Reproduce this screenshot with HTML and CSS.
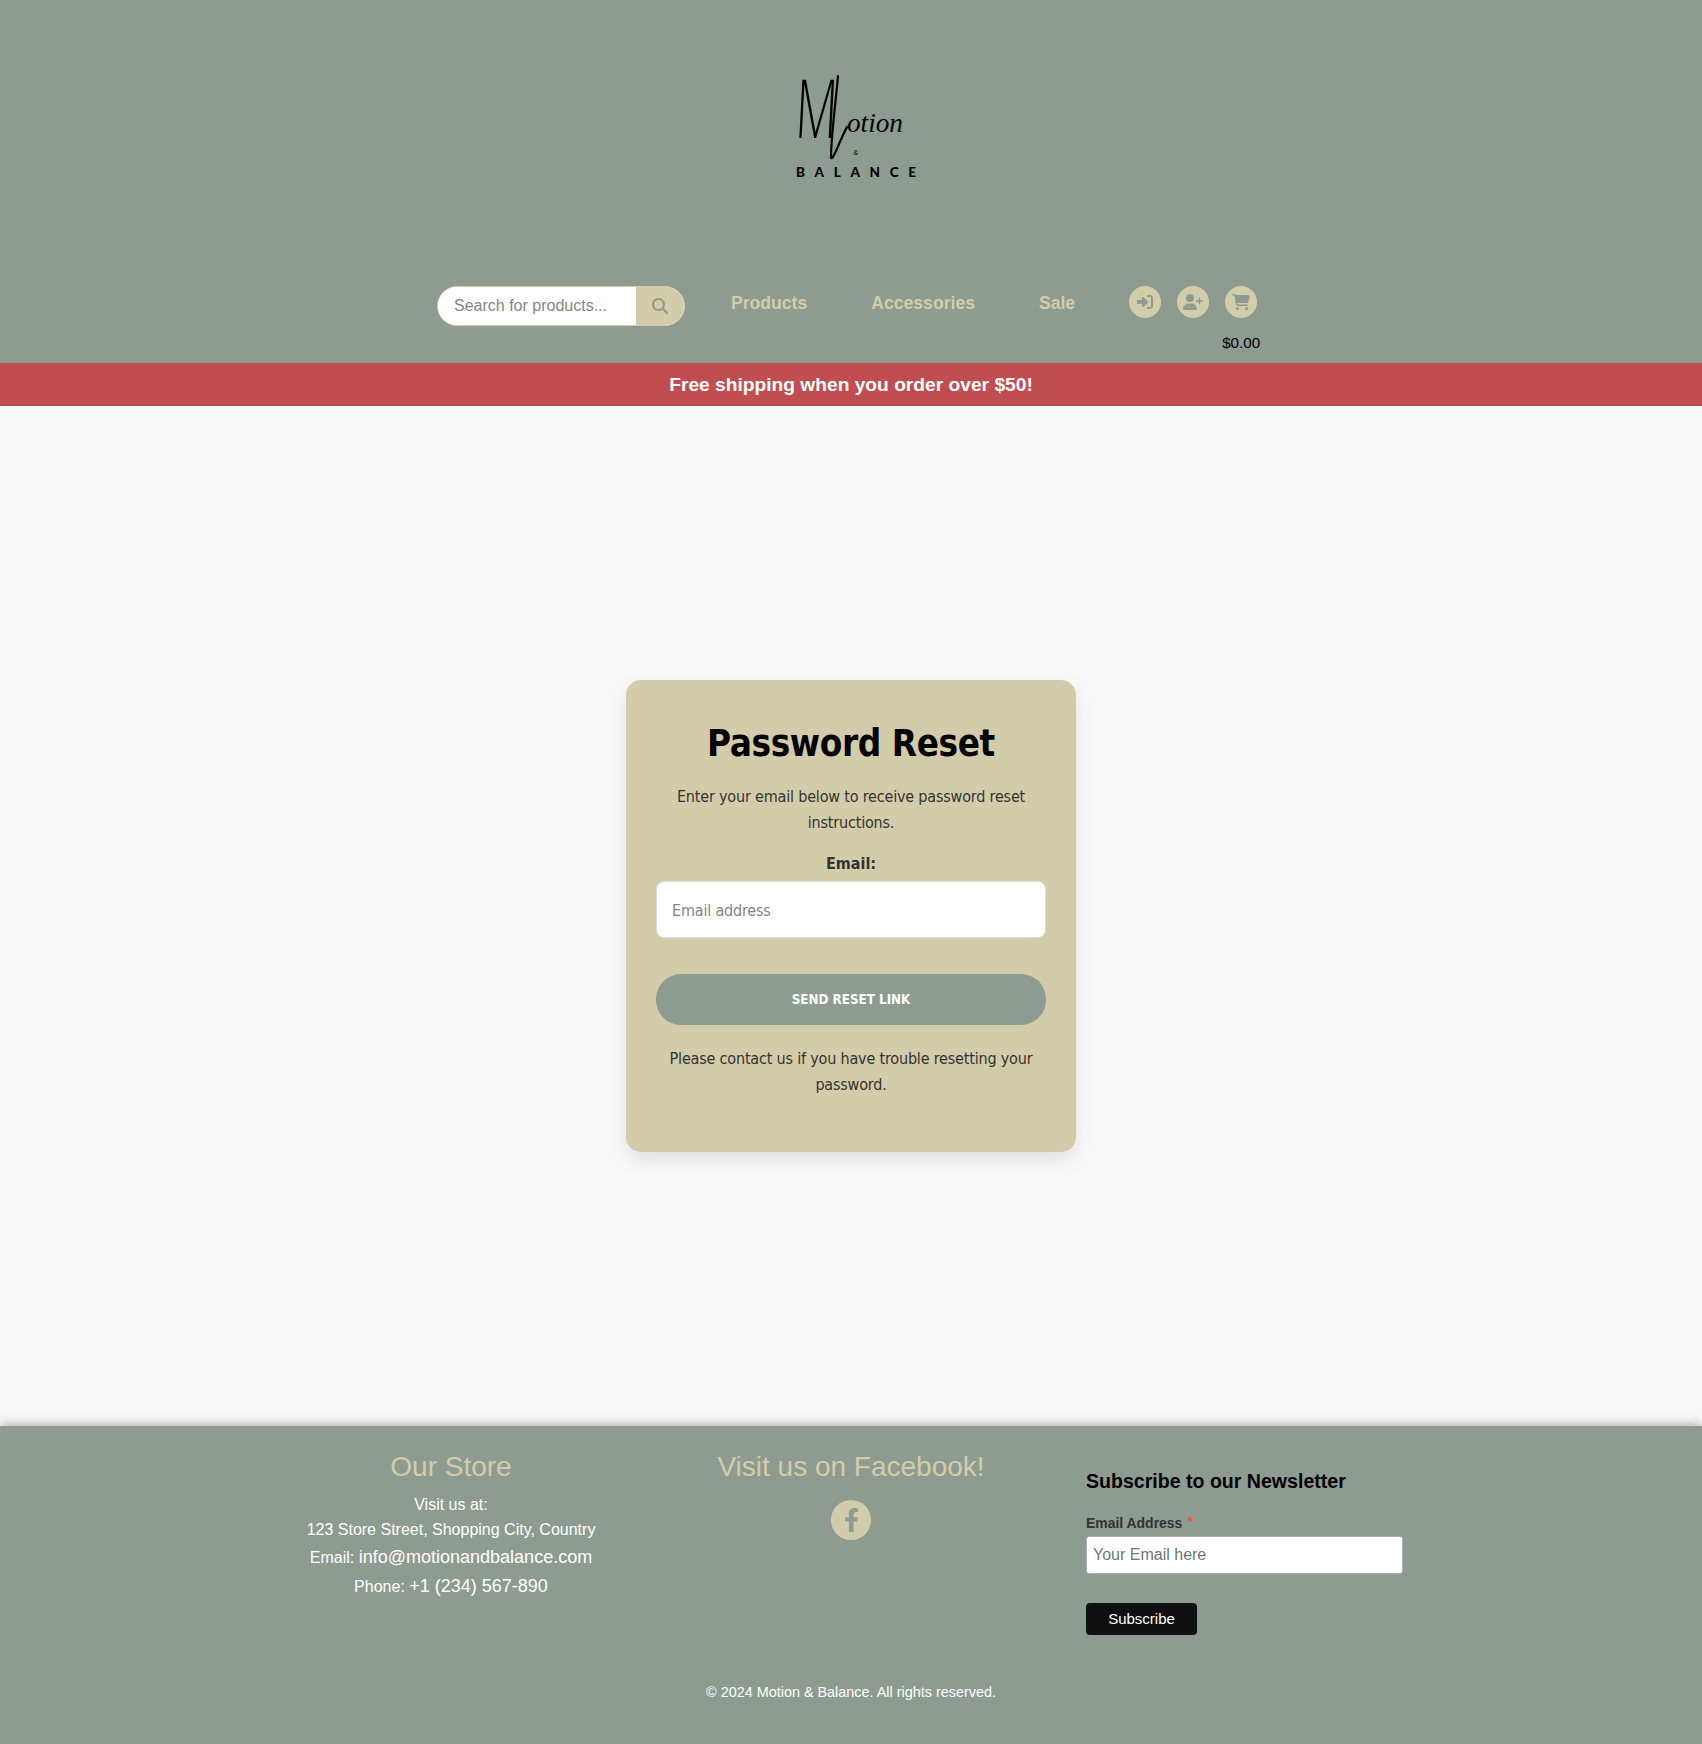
FILE: index.html
```html
<!DOCTYPE html>
<html lang="en">
<head>
<meta charset="utf-8">
<title>Motion &amp; Balance - Password Reset</title>
<link rel="stylesheet" href="styles.css">
</head>
<body>
<header class="site-header">
  <a class="logo" href="#" aria-label="Motion &amp; Balance">
    <svg width="170" height="130" viewBox="0 0 170 130">
      <text class="logo-initial" transform="translate(24.500 78) skewX(-3) scale(1 1.700)">M</text>
      <path class="logo-flourish" d="M68 16 C66 40 61 76 61 98 C63 101 69 82 77 67"/>
      <text class="logo-script" x="77" y="71.500" textLength="56" lengthAdjust="spacingAndGlyphs">otion</text>
      <text class="logo-amp" x="83.500" y="95">&amp;</text>
      <text class="logo-name" x="26" y="116.500" textLength="120">BALANCE</text>
    </svg>
  </a>
  <div class="toolbar">
    <form class="search">
      <input class="search-input" type="text" placeholder="Search for products...">
      <button class="search-button" type="button" aria-label="Search">
        <svg width="16" height="16" viewBox="0 0 512 512"><path d="M416 208c0 45.900-14.900 88.300-40 122.700L502.600 457.400c12.500 12.500 12.500 32.800 0 45.300s-32.800 12.500-45.300 0L330.700 376c-34.400 25.200-76.800 40-122.700 40C93.100 416 0 322.900 0 208S93.100 0 208 0S416 93.100 416 208zM208 352a144 144 0 1 0 0-288 144 144 0 1 0 0 288z"/></svg>
      </button>
    </form>
    <nav class="nav">
      <a href="#">Products</a>
      <a href="#">Accessories</a>
      <a href="#">Sale</a>
    </nav>
    <div class="actions">
      <a class="round" href="#" aria-label="Log in"><svg width="16" height="16" viewBox="0 0 512 512"><path d="M217.900 105.900L340.700 228.700c7.200 7.200 11.300 17.100 11.300 27.300s-4.100 20.100-11.300 27.300L217.900 406.100c-6.400 6.400-15 9.900-24 9.900c-18.700 0-33.900-15.200-33.900-33.900l0-62.100L32 320c-17.700 0-32-14.300-32-32l0-64c0-17.700 14.300-32 32-32l128 0 0-62.100c0-18.700 15.200-33.900 33.900-33.900c9 0 17.600 3.600 24 9.900zM352 416l64 0c17.700 0 32-14.300 32-32l0-256c0-17.700-14.300-32-32-32l-64 0c-17.700 0-32-14.300-32-32s14.300-32 32-32l64 0c53 0 96 43 96 96l0 256c0 53-43 96-96 96l-64 0c-17.700 0-32-14.300-32-32s14.300-32 32-32z"/></svg></a>
      <a class="round" href="#" aria-label="Register"><svg width="20" height="16" viewBox="0 0 640 512"><path d="M96 128a128 128 0 1 1 256 0A128 128 0 1 1 96 128zM0 482.300C0 383.800 79.800 304 178.300 304l91.400 0C368.200 304 448 383.800 448 482.300c0 16.400-13.300 29.700-29.700 29.700L29.700 512C13.300 512 0 498.700 0 482.300zM504 312l0-64-64 0c-13.300 0-24-10.700-24-24s10.700-24 24-24l64 0 0-64c0-13.300 10.700-24 24-24s24 10.700 24 24l0 64 64 0c13.300 0 24 10.700 24 24s-10.700 24-24 24l-64 0 0 64c0 13.300-10.700 24-24 24s-24-10.700-24-24z"/></svg></a>
      <div class="cart">
        <a class="round" href="#" aria-label="Cart"><svg width="18" height="16" viewBox="0 0 576 512"><path d="M0 24C0 10.700 10.700 0 24 0L69.500 0c22 0 41.500 12.800 50.600 32l411 0c26.300 0 45.500 25 38.600 50.400l-41 152.300c-8.500 31.400-37 53.300-69.500 53.300l-288.500 0 5.400 28.500c2.200 11.300 12.100 19.500 23.600 19.500L488 336c13.300 0 24 10.700 24 24s-10.700 24-24 24l-288.300 0c-34.600 0-64.300-24.600-70.700-58.500L77.400 54.500c-.7-3.800-4-6.500-7.900-6.500L24 48C10.700 48 0 37.300 0 24zM128 464a48 48 0 1 1 96 0 48 48 0 1 1-96 0zm336-48a48 48 0 1 1 0 96 48 48 0 1 1 0-96z"/></svg></a>
        <span class="total">$0.00</span>
      </div>
    </div>
  </div>
</header>
<div class="banner">Free shipping when you order over $50!</div>
<main class="content">
  <form class="card">
    <h1>Password Reset</h1>
    <p class="intro">Enter your email below to receive password reset<br>instructions.</p>
    <label class="field-label" for="email">Email:</label>
    <input class="field" id="email" type="email" placeholder="Email address">
    <button class="submit" type="button">SEND RESET LINK</button>
    <p class="help">Please contact us if you have trouble resetting your<br>password.</p>
  </form>
</main>
<footer class="footer">
  <div class="columns">
    <section class="column">
      <h3>Our Store</h3>
      <p>Visit us at:</p>
      <p>123 Store Street, Shopping City, Country</p>
      <p class="contact">Email: <a class="mail" href="#">info@motionandbalance.com</a></p>
      <p class="contact">Phone: <a class="phone" href="#">+1 (234) 567-890</a></p>
    </section>
    <section class="column">
      <h3>Visit us on Facebook!</h3>
      <a class="facebook" href="#" aria-label="Facebook"><svg width="15" height="24" viewBox="0 0 320 512"><path d="M279.140 288l14.220-92.660h-88.910v-60.130c0-25.350 12.420-50.060 52.240-50.060h40.420V6.260S260.430 0 225.360 0c-73.220 0-121.080 44.380-121.080 124.720v70.620H22.890V288h81.390v224h100.170V288z"/></svg></a>
    </section>
    <form class="newsletter">
      <h2>Subscribe to our Newsletter</h2>
      <label for="news">Email Address <span class="required">*</span></label>
      <input id="news" type="email" placeholder="Your Email here">
      <button type="button">Subscribe</button>
    </form>
  </div>
  <p class="copyright">© 2024 Motion &amp; Balance. All rights reserved.</p>
</footer>
</body>
</html>
```
FILE: styles.css
```css
* { box-sizing: border-box; }
body {
  margin: 0;
  min-height: 1744px;
  display: flex;
  flex-direction: column;
  background: #f9f9f9;
  font: 16px/25px "Liberation Sans", Arial, sans-serif;
  color: #333;
}
h1, h2, h3, p { margin: 0; }
a { color: inherit; text-decoration: none; }
svg { display: block; flex: none; overflow: visible; }
input, button { margin: 0; border: 0; font: inherit; }

.site-header { height: 363px; padding-top: 60px; background: #8e9b90; }
.logo { display: block; width: 170px; margin-left: 770px; color: #000; }
.logo-initial { font: 300 48px "Open Sans", sans-serif; }
.logo-flourish { fill: none; stroke: #000; stroke-width: 2.2; stroke-linecap: round; }
.logo-script { font: italic 27px "Liberation Serif", serif; }
.logo-amp { font: 7px "Liberation Sans", sans-serif; }
.logo-name { font: 900 13.500px Lato, sans-serif; }
.toolbar { display: flex; align-items: flex-start; margin: 96px 0 0 437px; }
.search {
  display: flex;
  width: 248px;
  height: 40px;
  border: 1px solid #d3ccaa;
  border-radius: 20px;
  background: #fff;
  overflow: hidden;
}
.search-input { width: 198px; padding: 0 16px 2px; background: #fff; outline: 0; }
.search-input::placeholder, .field::placeholder { color: #858585; opacity: 1; }
.search-button {
  display: flex;
  flex: 1;
  align-items: center;
  justify-content: center;
  padding: 0;
  background: #d3ccaa;
  fill: #8e9b90;
}
.nav { display: flex; gap: 64px; margin-left: 46px; padding-top: 5px; font-size: 17.600px; font-weight: bold; color: #d3ccaa; }
.actions { display: flex; gap: 16px; margin-left: 54px; }
.round {
  display: flex;
  align-items: center;
  justify-content: center;
  width: 32px;
  height: 32px;
  border-radius: 50%;
  background: #d3ccaa;
  fill: #8e9b90;
}
.cart { display: flex; flex-direction: column; align-items: center; width: 32px; }
.total { margin-top: 12px; font-size: 15.200px; color: #000; }
.banner { height: 43px; background: #c04e50; color: #fff; font-size: 19.200px; font-weight: bold; line-height: 43px; text-align: center; }

.content { display: flex; flex: 1; align-items: center; justify-content: center; }
.card {
  display: flex;
  flex-direction: column;
  width: 450px;
  height: 472px;
  padding: 39px 30px 0;
  border-radius: 15px;
  background: #d3ccaa;
  box-shadow: 0 8px 20px rgba(0, 0, 0, .1);
  font-family: "DejaVu Sans Condensed", "DejaVu Sans", sans-serif;
  font-stretch: condensed;
  line-height: 26px;
  text-align: center;
}
.card h1 { font-size: 36.500px; letter-spacing: -.400px; line-height: 50px; color: #000; }
.intro, .help, .field { letter-spacing: -.185px; }
.intro { margin-top: 15px; }
.field-label { margin-top: 15px; font-weight: bold; }
.field { height: 57px; margin-top: 4px; padding: 1px 15px 0; border: 1px solid #ddd; border-radius: 8px; background: #fff; outline: 0; }
.submit { height: 51px; margin-top: 36px; border-radius: 25px; background: #8e9b90; color: #fff; font-size: 13.300px; font-weight: bold; }
.help { margin-top: 21px; }

.footer { height: 318px; background: #8e9b90; color: #fff; box-shadow: 0 -2px 10px rgba(0, 0, 0, .3); }
.columns { display: grid; grid-template-columns: repeat(3, 400px); width: 1200px; height: 240px; margin: 0 auto; }
.column { padding-top: 24px; text-align: center; }
.column h3 { margin-bottom: 8px; font-size: 28px; font-weight: normal; line-height: 34px; color: #d3ccaa; }
.contact { position: relative; top: 1px; line-height: 29px; }
.contact a { font-size: 18px; }
.facebook { display: flex; align-items: center; justify-content: center; width: 40px; height: 40px; margin: 16px auto 0; border-radius: 50%; background: #d3ccaa; fill: #8e9b90; }
.newsletter { display: flex; flex-direction: column; align-items: flex-start; padding: 42px 0 0 35px; }
.newsletter h2 { font-size: 19.570px; line-height: 26px; color: #000; }
.newsletter label { margin-top: 19px; font-size: 13.950px; font-weight: bold; line-height: 20px; color: #333; }
.required { margin-left: 1px; color: #e85c41; font-size: 16px; line-height: 12px; }
.newsletter input { width: 317px; height: 38px; margin-top: 3px; padding: 0 6px; border: 1px solid #abb0b2; border-radius: 3px; background: #fff; outline: 0; }
.newsletter input::placeholder { color: #6c757d; opacity: 1; }
.newsletter button { width: 111px; height: 32px; margin-top: 29px; padding: 0 0 2px; border-radius: 4px; background: #101010; color: #fff; font-size: 15px; }
.copyright { padding-top: 14px; font-size: 14.400px; text-align: center; }
```
